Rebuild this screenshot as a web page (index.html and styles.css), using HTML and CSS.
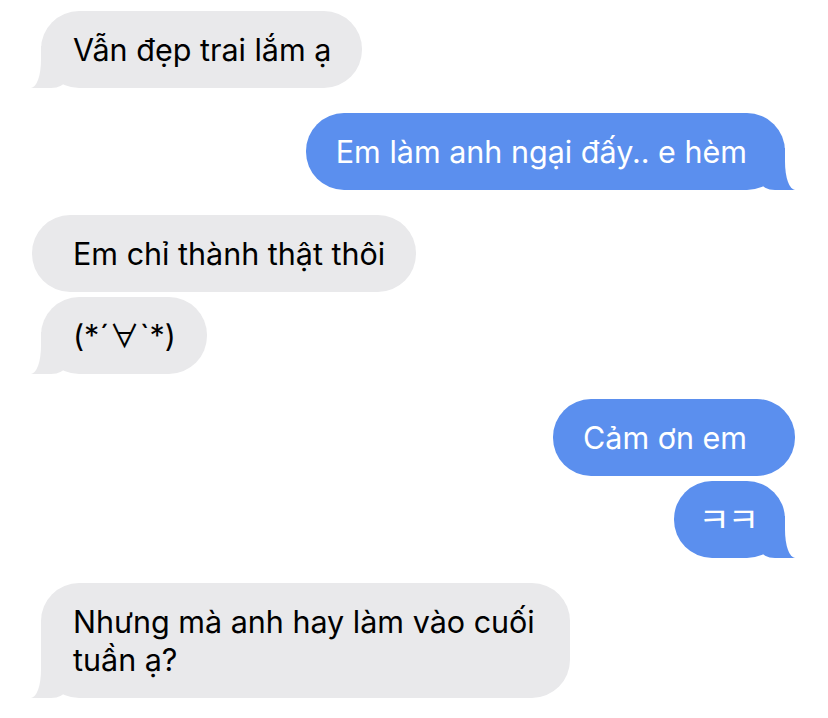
FILE: index.html
```html
<!DOCTYPE html>
<html lang="vi">
<head>
    <meta charset="UTF-8">
    <meta name="viewport" content="width=device-width, initial-scale=1.0">
    <title>Tin nhắn</title>
    <link rel="stylesheet" href="styles.css">
</head>
<body>
    <div class="thread">
        <div class="group them">
            <p class="bubble tail">Vẫn đẹp trai lắm ạ</p>
        </div>

        <div class="group me">
            <p class="bubble tail">Em làm anh ngại đấy.. e hèm</p>
        </div>

        <div class="group them">
            <p class="bubble">Em chỉ thành thật thôi</p>
            <p class="bubble tail">(*´∀`*)</p>
        </div>

        <div class="group me">
            <p class="bubble">Cảm ơn em</p>
            <p class="bubble tail kk">ㅋㅋ</p>
        </div>

        <div class="group them">
            <p class="bubble tail">Nhưng mà anh hay làm vào cuối tuần ạ?</p>
        </div>
    </div>
</body>
</html>
```

FILE: styles.css
```css
:root {
    --gray: #e9e9eb;
    --blue: #5b8fee;
    --page: #ffffff;
}

body {
    margin: 0;
    background: var(--page);
    font-family: 'Inter', 'Noto Sans CJK KR', 'DejaVu Sans', sans-serif;
}

.thread {
    display: flex;
    flex-direction: column;
    gap: 25px;
    padding: 11px 33px 18px 32px;
}

.group {
    display: flex;
    flex-direction: column;
    gap: 5px;
}

.them { align-items: flex-start; }
.me { align-items: flex-end; }

.bubble {
    position: relative;
    z-index: 0;
    margin: 0;
    max-width: 466px;
    padding: 19.5px 31px 19.5px 41px;
    border-radius: 38px;
    font-size: 30.5px;
    line-height: 38px;
}

.them .bubble {
    background-color: var(--gray);
    color: #000;
}

.me .bubble {
    background-color: var(--blue);
    color: #fff;
    padding-left: 30px;
    padding-right: 48px;
}

.them .bubble.tail {
    margin-left: 9px;
    padding-left: 32px;
}

.me .bubble.tail {
    margin-right: 10px;
    padding-right: 38px;
}

/* tail: a blob of the bubble colour, carved by a white corner */
.bubble.tail::before,
.bubble.tail::after {
    content: "";
    position: absolute;
    z-index: -1;
    bottom: 0;
}

.bubble.tail::before {
    width: 34px;
    height: 42px;
    background-color: inherit;
}

.bubble.tail::after {
    width: 30px;
    height: 44px;
    background-color: var(--page);
}

.them .bubble.tail::before {
    left: -10px;
    border-bottom-right-radius: 14px 8px;
}

.them .bubble.tail::after {
    left: -30px;
    border-bottom-right-radius: 10px 28px;
}

.me .bubble.tail::before {
    right: -10px;
    border-bottom-left-radius: 14px 8px;
}

.me .bubble.tail::after {
    right: -30px;
    border-bottom-left-radius: 10px 28px;
}

.me .bubble.kk {
    padding-left: 24px;
    padding-right: 28px;
    font-size: 34px;
    letter-spacing: -2px;
}
```
